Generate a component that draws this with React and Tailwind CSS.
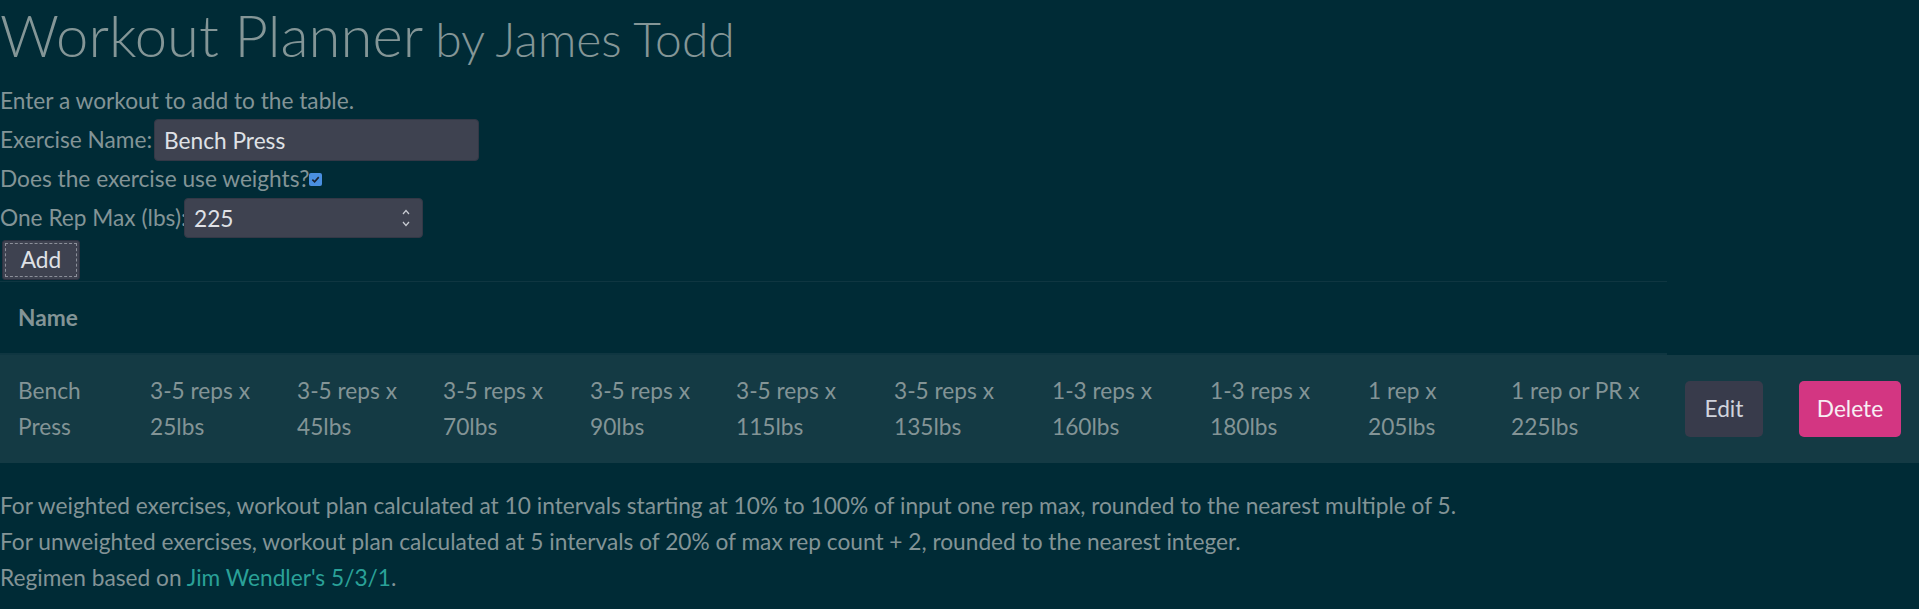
import React from "react";

const sets = [
  ["3-5 reps x", "25lbs"],
  ["3-5 reps x", "45lbs"],
  ["3-5 reps x", "70lbs"],
  ["3-5 reps x", "90lbs"],
  ["3-5 reps x", "115lbs"],
  ["3-5 reps x", "135lbs"],
  ["1-3 reps x", "160lbs"],
  ["1-3 reps x", "180lbs"],
  ["1 rep x", "205lbs"],
  ["1 rep or PR x", "225lbs"],
];

function Cell({ a, b }) {
  return (
    <div className="px-[18px] py-[18px] whitespace-nowrap">
      <div className="h-[36px]">{a}</div>
      <div className="h-[36px]">{b}</div>
    </div>
  );
}

export default function App() {
  return (
    <div className="h-screen overflow-hidden bg-[#002b36] text-[#839496] font-['Lato',sans-serif] text-[22.7px] leading-[36px]">
      <h1 className="flex items-baseline h-[64px] leading-[70px] text-[58px] font-light text-[#849697]">
        <span>Workout Planner</span>
        <span className="ml-[12px] text-[48px]">by James Todd</span>
      </h1>

      <div className="mt-[19px] h-[36px]">Enter a workout to add to the table.</div>

      <div className="flex items-center h-[42px]">
        <span className="w-[154px] whitespace-nowrap">Exercise Name:</span>
        <input
          className="w-[325px] h-[42px] px-[9px] rounded-[4px] bg-[#3e4250] border border-[#333846] text-[#dfe1e6] outline-none"
          defaultValue="Bench Press"
        />
      </div>

      <div className="flex items-center h-[36px]">
        <span className="w-[309px] whitespace-nowrap">Does the exercise use weights?</span>
        <span className="w-[13px] h-[13px] rounded-[2px] bg-[#4a8fe0] flex items-center justify-center">
          <svg width="9" height="9" viewBox="0 0 10 10">
            <path d="M1.5 5.2 L4 7.6 L8.6 2.4" fill="none" stroke="#1b2330" strokeWidth="1.8" />
          </svg>
        </span>
      </div>

      <div className="flex items-center h-[42px]">
        <span className="w-[184px] whitespace-nowrap">One Rep Max (lbs):</span>
        <div className="relative w-[239px] h-[40px] rounded-[4px] bg-[#3e4250] border border-[#333846] flex items-center">
          <input
            className="w-full h-full px-[9px] bg-transparent text-[#dfe1e6] outline-none"
            defaultValue="225"
          />
          <svg className="absolute right-[12px] top-[9px]" width="8" height="20" viewBox="0 0 8 20">
            <path d="M1 6 L4 2.5 L7 6" fill="none" stroke="#c8cbd2" strokeWidth="1.2" />
            <path d="M1 14 L4 17.5 L7 14" fill="none" stroke="#c8cbd2" strokeWidth="1.2" />
          </svg>
        </div>
      </div>

      <div className="mt-px h-[40px] flex">
        <button className="ml-[2px] w-[78px] h-[40px] rounded-[3px] bg-[#3e4250] border border-[#2c3140] p-[2px] text-[#dfe1e6]">
          <span className="flex items-center justify-center w-full h-full border border-dashed border-[#8c909a]">
            Add
          </span>
        </button>
      </div>

      <div className="mt-px">
        <div className="w-[1667px] border-t border-b-2 border-[#0f3641] pt-[18px] pb-[17px] px-[18px] h-[74px]">
          <span className="font-bold">Name</span>
        </div>
        <div className="grid grid-cols-[132px_147px_146px_147px_146px_158px_158px_158px_158px_143px_174px_114px_138px] bg-[#143a44]">
          <Cell a="Bench" b="Press" />
          {sets.map(([a, b], i) => (
            <Cell key={i} a={a} b={b} />
          ))}
          <div className="px-[18px] py-[18px] flex items-center">
            <button className="w-[78px] h-[56px] rounded-[5px] bg-[#383b4b] text-[#cfd3dc]">Edit</button>
          </div>
          <div className="px-[18px] py-[18px] flex items-center">
            <button className="w-[103px] h-[56px] rounded-[5px] bg-[#d33682] text-[#f7eef3]">Delete</button>
          </div>
        </div>
      </div>

      <div className="mt-[25px]">
        <p>
          For weighted exercises, workout plan calculated at 10 intervals starting at 10% to 100% of input one rep max,
          rounded to the nearest multiple of 5.
        </p>
        <p>For unweighted exercises, workout plan calculated at 5 intervals of 20% of max rep count + 2, rounded to the nearest integer.</p>
        <p>
          Regimen based on <a className="text-[#2aa198]" href="#">Jim Wendler's 5/3/1</a>.
        </p>
      </div>
    </div>
  );
}
